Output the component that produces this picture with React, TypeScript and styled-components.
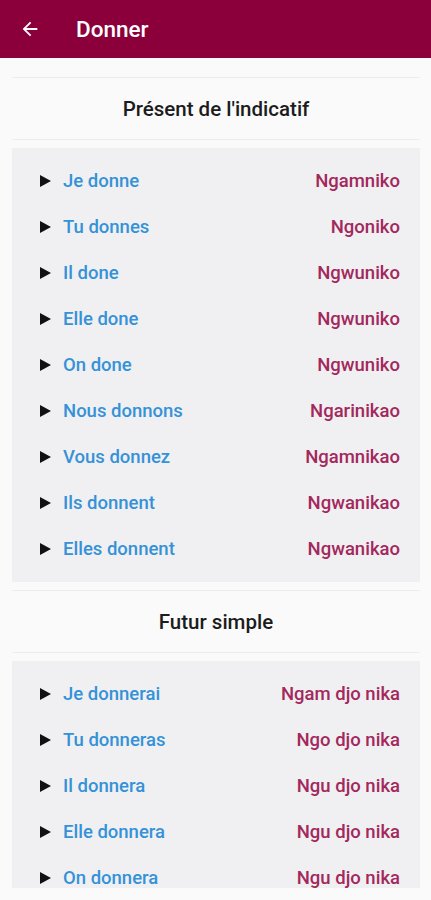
import React from 'react';
import styled, { createGlobalStyle } from 'styled-components';

const GlobalStyle = createGlobalStyle`
  html, body {
    margin: 0;
    padding: 0;
    background: #fafafa;
    font-family: Roboto, "Liberation Sans", sans-serif;
  }
`;

const Screen = styled.div`
  display: flex;
  flex-direction: column;
  height: 900px;
  background: #fafafa;
`;

const TopBar = styled.header`
  display: flex;
  align-items: center;
  height: 58px;
  flex-shrink: 0;
  padding: 0 0 0 19px;
  background: #8b003a;
  color: #ffffff;
`;

const BackButton = styled.button`
  display: flex;
  align-items: center;
  justify-content: center;
  width: 22px;
  height: 22px;
  padding: 0;
  border: none;
  background: transparent;
  color: #ffffff;
`;

const Title = styled.h1`
  margin: 0 0 0 35px;
  font-size: 22.5px;
  font-weight: 500;
`;

const Content = styled.main`
  flex: 1;
  overflow: hidden;
  margin-bottom: 12px;
  padding: 19px 11px 0 12px;
`;

const Section = styled.section`
  display: flex;
  flex-direction: column;
  margin-bottom: 8px;
`;

const SectionHead = styled.h2`
  margin: 0;
  height: 61px;
  display: flex;
  align-items: center;
  justify-content: center;
  border-top: 1px solid #ececec;
  border-bottom: 1px solid #ececec;
  font-size: 20.5px;
  font-weight: 500;
  color: #1c1c1c;
`;

const Card = styled.div`
  display: flex;
  flex-direction: column;
  margin-top: 8px;
  padding: 10px 0 10px;
  background: #f0f0f2;
`;

const Row = styled.div`
  display: flex;
  align-items: center;
  height: 46px;
  padding: 0 20px 0 28px;
`;

const Arrow = styled.span`
  width: 0;
  height: 0;
  border-top: 6px solid transparent;
  border-bottom: 6px solid transparent;
  border-left: 11px solid #111111;
  margin-right: 12px;
`;

const French = styled.span`
  flex: 1;
  font-size: 18.5px;
  font-weight: 500;
  color: #3592d8;
`;

const Kanak = styled.span`
  font-size: 18.5px;
  font-weight: 500;
  color: #a3285c;
`;

const tenses = [
  {
    name: "Présent de l'indicatif",
    rows: [
      ['Je donne', 'Ngamniko'],
      ['Tu donnes', 'Ngoniko'],
      ['Il done', 'Ngwuniko'],
      ['Elle done', 'Ngwuniko'],
      ['On done', 'Ngwuniko'],
      ['Nous donnons', 'Ngarinikao'],
      ['Vous donnez', 'Ngamnikao'],
      ['Ils donnent', 'Ngwanikao'],
      ['Elles donnent', 'Ngwanikao'],
    ],
  },
  {
    name: 'Futur simple',
    rows: [
      ['Je donnerai', 'Ngam djo nika'],
      ['Tu donneras', 'Ngo djo nika'],
      ['Il donnera', 'Ngu djo nika'],
      ['Elle donnera', 'Ngu djo nika'],
      ['On donnera', 'Ngu djo nika'],
    ],
  },
];

export default function App() {
  return (
    <Screen>
      <GlobalStyle />
      <TopBar>
        <BackButton aria-label="Retour">
          <svg width="22" height="22" viewBox="0 0 24 24">
            <path d="M20 11H7.83l5.59-5.59L12 4l-8 8 8 8 1.41-1.41L7.83 13H20v-2z" fill="currentColor" />
          </svg>
        </BackButton>
        <Title>Donner</Title>
      </TopBar>
      <Content>
        {tenses.map((t) => (
          <Section key={t.name}>
            <SectionHead>{t.name}</SectionHead>
            <Card>
              {t.rows.map(([fr, kn]) => (
                <Row key={fr}>
                  <Arrow />
                  <French>{fr}</French>
                  <Kanak>{kn}</Kanak>
                </Row>
              ))}
            </Card>
          </Section>
        ))}
      </Content>
    </Screen>
  );
}
